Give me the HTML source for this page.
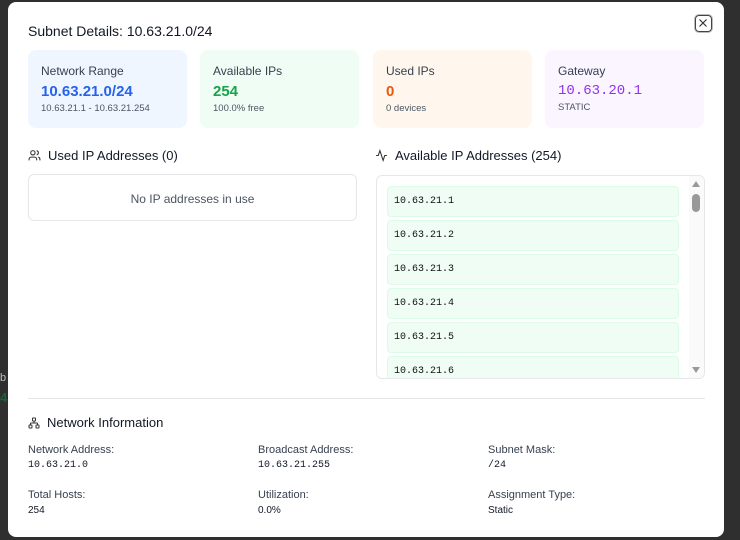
<!DOCTYPE html>
<html><head><style>
*{box-sizing:border-box;margin:0;padding:0}
body{width:740px;height:540px;background:#2f2f2f;font-family:"Liberation Sans",sans-serif;position:relative;overflow:hidden;color:#111827}
.modal{position:absolute;left:8px;top:2px;width:716px;height:535px;background:#fff;border-radius:8px}
.a{position:absolute}
.card{position:absolute;top:48px;height:78px;width:159px;border-radius:8px;padding:14px 13px}
.card .l{font-size:12px;color:#374151}
.card .v{font-size:15px;font-weight:bold;margin-top:5px}
.card .s{font-size:9.5px;color:#4b5563;margin-top:3px}
.mono{font-family:"Liberation Mono",monospace}
.h{font-size:13px;color:#111827;display:flex;align-items:center;gap:7px}
.item{position:absolute;left:10px;width:292px;height:31px;background:#f0fdf4;border:1px solid #dcfce7;border-radius:4px;font-family:"Liberation Mono",monospace;font-size:10px;padding:9px 6px;color:#111}
.lab{font-size:11px;color:#374151}
.val{font-size:10px;margin-top:4px}
</style></head><body>
<div class="a" style="left:0;top:372px;font-size:11px;color:#bbb">b</div>
<div class="a" style="left:0;top:390px;font-size:13px;color:#166534;font-weight:bold">4</div>
<div class="modal">
<div class="a" style="left:20px;top:21px;font-size:14px">Subnet Details: 10.63.21.0/24</div>
<div class="a" style="left:687px;top:13px;width:17px;height:17px;border:1.5px solid #444;border-radius:4px;box-shadow:0 0 0 1px #bbb"><svg width="14" height="14" viewBox="0 0 14 14" style="position:absolute;left:0;top:0"><path d="M3.5 3.5L10.5 10.5M10.5 3.5L3.5 10.5" stroke="#333" stroke-width="1.2"/></svg></div>
<div class="card" style="left:20px;background:#eff6ff"><div class="l">Network Range</div><div class="v mono" style="color:#2563eb;font-family:'Liberation Sans',sans-serif">10.63.21.0/24</div><div class="s">10.63.21.1 - 10.63.21.254</div></div>
<div class="card" style="left:192px;background:#f0fdf4"><div class="l">Available IPs</div><div class="v" style="color:#16a34a">254</div><div class="s">100.0% free</div></div>
<div class="card" style="left:365px;background:#fff7ed"><div class="l">Used IPs</div><div class="v" style="color:#ea580c">0</div><div class="s">0 devices</div></div>
<div class="card" style="left:537px;background:#faf5ff"><div class="l">Gateway</div><div class="v mono" style="color:#9333ea;font-weight:normal;font-size:14px">10.63.20.1</div><div class="s">STATIC</div></div>
<div class="a h" style="left:20px;top:146px"><svg width="13" height="13" viewBox="0 0 24 24" fill="none" stroke="#333" stroke-width="2"><circle cx="9" cy="7" r="4"/><path d="M2 21v-2a4 4 0 0 1 4-4h6a4 4 0 0 1 4 4v2M16 3.1a4 4 0 0 1 0 7.8M22 21v-2a4 4 0 0 0-3-3.9"/></svg>Used IP Addresses (0)</div>
<div class="a" style="left:20px;top:172px;width:329px;height:47px;border:1px solid #e5e7eb;border-radius:6px;text-align:center;font-size:12px;color:#4b5563;padding-top:17px">No IP addresses in use</div>
<div class="a h" style="left:367px;top:146px"><svg width="13" height="13" viewBox="0 0 24 24" fill="none" stroke="#333" stroke-width="2"><path d="M22 12h-4l-3 9L9 3l-3 9H2"/></svg>Available IP Addresses (254)</div>
<div class="a" style="left:368px;top:173px;width:329px;height:204px;border:1px solid #e5e7eb;border-radius:6px;overflow:hidden">
<div class="item" style="top:10px">10.63.21.1</div>
<div class="item" style="top:44px">10.63.21.2</div>
<div class="item" style="top:78px">10.63.21.3</div>
<div class="item" style="top:112px">10.63.21.4</div>
<div class="item" style="top:146px">10.63.21.5</div>
<div class="item" style="top:180px">10.63.21.6</div>
<div class="a" style="right:0;top:0;width:15px;height:204px;background:#fafafa"></div>
<div class="a" style="right:4px;top:5px;width:0;height:0;border-left:4px solid transparent;border-right:4px solid transparent;border-bottom:6px solid #999"></div>
<div class="a" style="right:4px;top:18px;width:8px;height:18px;background:#999;border-radius:4px"></div>
<div class="a" style="right:4px;top:191px;width:0;height:0;border-left:4px solid transparent;border-right:4px solid transparent;border-top:6px solid #999"></div>
</div>
<div class="a" style="left:20px;top:396px;width:677px;height:1px;background:#e5e7eb"></div>
<div class="a h" style="left:20px;top:413px"><svg width="12" height="12" viewBox="0 0 24 24" fill="none" stroke="#333" stroke-width="2"><rect x="9" y="2" width="6" height="6" rx="1"/><rect x="2" y="16" width="6" height="6" rx="1"/><rect x="16" y="16" width="6" height="6" rx="1"/><path d="M5 16v-3a1 1 0 0 1 1-1h12a1 1 0 0 1 1 1v3M12 12V8"/></svg>Network Information</div>
<div class="a" style="left:20px;top:442px"><div class="lab">Network Address:</div><div class="val mono">10.63.21.0</div></div>
<div class="a" style="left:250px;top:442px"><div class="lab">Broadcast Address:</div><div class="val mono">10.63.21.255</div></div>
<div class="a" style="left:480px;top:442px"><div class="lab">Subnet Mask:</div><div class="val mono">/24</div></div>
<div class="a" style="left:20px;top:487px"><div class="lab">Total Hosts:</div><div class="val">254</div></div>
<div class="a" style="left:250px;top:487px"><div class="lab">Utilization:</div><div class="val">0.0%</div></div>
<div class="a" style="left:480px;top:487px"><div class="lab">Assignment Type:</div><div class="val">Static</div></div>
</div>
</body></html>
